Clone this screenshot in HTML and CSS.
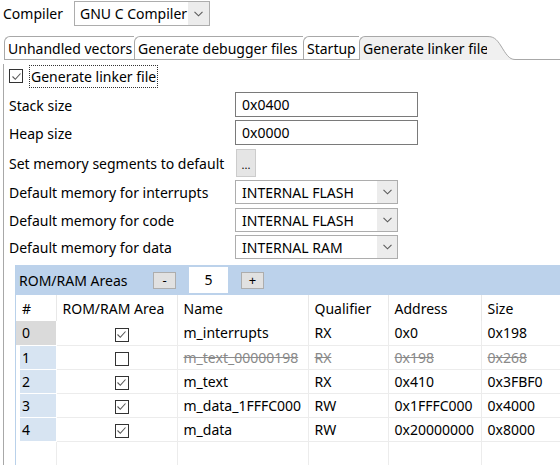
FILE: index.html
```html
<!DOCTYPE html>
<html>
<head>
<meta charset="utf-8">
<link rel="stylesheet" href="styles.css">
</head>
<body>
<div class="top">
  <span class="top-label">Compiler</span>
  <div class="combo">
    <span class="combo-text">GNU C Compiler</span>
    <span class="combo-arrow"><svg width="9" height="6" viewBox="0 0 9 6"><path d="M0.5 0.8 L4.5 4.8 L8.5 0.8" fill="none" stroke="#5a5a5a" stroke-width="1.1"/></svg></span>
  </div>
</div>
<div class="tabs">
  <div class="tab t1">Unhandled vectors</div>
  <div class="tab t2">Generate debugger files</div>
  <div class="tab t3">Startup</div>
  <div class="tab t4 sel">Generate linker file</div>
  <svg class="tab-curve" width="28" height="24" viewBox="0 0 28 24"><path d="M0 0.5 C6 0.5 9 2 14 10 C19 18 22 23.5 28 23.5 L28 24 L0 24 Z" fill="#f0f0f0"/><path d="M0 0.5 C6 0.5 9 2 14 10 C19 18 22 23.5 28 23.5" fill="none" stroke="#a8a8a8" stroke-width="1"/></svg>
  <div class="tab-fill"></div>
</div>
<div class="panel">
  <div class="chkrow">
    <span class="cb"><svg width="11" height="11" viewBox="0 0 11 11"><path d="M1.5 5.5 L4.3 8.3 L9.5 2.5" fill="none" stroke="#555" stroke-width="1.1"/></svg></span>
    <span class="focus-label">Generate linker file</span>
  </div>
  <div class="form">
    <div class="frow r1"><span class="flabel">Stack size</span><span class="input">0x0400</span></div>
    <div class="frow r2"><span class="flabel">Heap size</span><span class="input">0x0000</span></div>
    <div class="frow r3"><span class="flabel">Set memory segments to default</span><span class="dots">...</span></div>
    <div class="frow r4"><span class="flabel">Default memory for interrupts</span><span class="dd"><span class="dd-text">INTERNAL FLASH</span><span class="dd-arrow"><svg width="9" height="6" viewBox="0 0 9 6"><path d="M0.5 0.8 L4.5 4.8 L8.5 0.8" fill="none" stroke="#5a5a5a" stroke-width="1.1"/></svg></span></span></div>
    <div class="frow r5"><span class="flabel">Default memory for code</span><span class="dd"><span class="dd-text">INTERNAL FLASH</span><span class="dd-arrow"><svg width="9" height="6" viewBox="0 0 9 6"><path d="M0.5 0.8 L4.5 4.8 L8.5 0.8" fill="none" stroke="#5a5a5a" stroke-width="1.1"/></svg></span></span></div>
    <div class="frow r6"><span class="flabel">Default memory for data</span><span class="dd"><span class="dd-text">INTERNAL RAM</span><span class="dd-arrow"><svg width="9" height="6" viewBox="0 0 9 6"><path d="M0.5 0.8 L4.5 4.8 L8.5 0.8" fill="none" stroke="#5a5a5a" stroke-width="1.1"/></svg></span></span></div>
  </div>
  <div class="group">
    <div class="ghead">
      <span class="gtitle">ROM/RAM Areas</span>
      <span class="sbtn">-</span>
      <span class="count">5</span>
      <span class="sbtn">+</span>
    </div>
    <table class="grid">
      <colgroup><col class="c0"><col class="c1"><col class="c2"><col class="c3"><col class="c4"><col class="c5"><col class="c6"></colgroup>
      <thead>
        <tr><th>#</th><th>ROM/RAM Area</th><th>Name</th><th>Qualifier</th><th>Address</th><th>Size</th><th class="last"></th></tr>
      </thead>
      <tbody>
        <tr><td class="rh rh0">0</td><td class="ck"><span class="cb"><svg width="11" height="11" viewBox="0 0 11 11"><path d="M1.5 5.5 L4.3 8.3 L9.5 2.5" fill="none" stroke="#555" stroke-width="1.1"/></svg></span></td><td>m_interrupts</td><td>RX</td><td>0x0</td><td>0x198</td><td class="last"></td></tr>
        <tr class="off"><td class="rh">1</td><td class="ck"><span class="cb"></span></td><td class="strike">m_text_00000198</td><td class="strike">RX</td><td class="strike">0x198</td><td class="strike">0x268</td><td class="last"></td></tr>
        <tr><td class="rh">2</td><td class="ck"><span class="cb"><svg width="11" height="11" viewBox="0 0 11 11"><path d="M1.5 5.5 L4.3 8.3 L9.5 2.5" fill="none" stroke="#555" stroke-width="1.1"/></svg></span></td><td>m_text</td><td>RX</td><td>0x410</td><td>0x3FBF0</td><td class="last"></td></tr>
        <tr><td class="rh">3</td><td class="ck"><span class="cb"><svg width="11" height="11" viewBox="0 0 11 11"><path d="M1.5 5.5 L4.3 8.3 L9.5 2.5" fill="none" stroke="#555" stroke-width="1.1"/></svg></span></td><td>m_data_1FFFC000</td><td>RW</td><td>0x1FFFC000</td><td>0x4000</td><td class="last"></td></tr>
        <tr><td class="rh">4</td><td class="ck"><span class="cb"><svg width="11" height="11" viewBox="0 0 11 11"><path d="M1.5 5.5 L4.3 8.3 L9.5 2.5" fill="none" stroke="#555" stroke-width="1.1"/></svg></span></td><td>m_data</td><td>RW</td><td>0x20000000</td><td>0x8000</td><td class="last"></td></tr>
        <tr class="empty"><td></td><td></td><td></td><td></td><td></td><td></td><td class="last"></td></tr>
      </tbody>
    </table>
  </div>
</div>
</body>
</html>
```
FILE: styles.css
```css
* { box-sizing: border-box; }
html, body { margin: 0; padding: 0; }
body {
  width: 560px;
  height: 465px;
  overflow: hidden;
  background: #fff;
  color: #000;
  font-family: "Noto Sans", sans-serif;
  font-size: 14px;
}
.top {
  display: flex;
  align-items: flex-start;
  height: 36px;
  padding: 1px 0 0 3px;
}
.top-label {
  line-height: 25px;
  width: 71px;
}
.combo {
  display: flex;
  width: 136px;
  height: 25px;
  border: 1px solid #adadad;
}
.combo-text {
  flex: 1;
  overflow: hidden;
  white-space: nowrap;
  padding-left: 5px;
  line-height: 23px;
}
.combo-arrow {
  width: 21px;
  background: #ececec;
  display: flex;
  align-items: center;
  justify-content: center;
}
.tabs {
  display: flex;
  height: 24px;
  padding-left: 4px;
}
.tab {
  height: 24px;
  line-height: 23px;
  border-top: 1px solid #a8a8a8;
  border-left: 1px solid #a8a8a8;
  border-bottom: 1px solid #a8a8a8;
  border-top-left-radius: 6px;
  padding-left: 3px;
  white-space: nowrap;
  overflow: hidden;
  flex: none;
}
.t1 { width: 130px; }
.t2 { width: 169px; }
.t3 { width: 56px; }
.t4 { width: 128px; overflow: visible; }
.tab.sel {
  background: #f0f0f0;
  border-bottom: none;
}
.tab-curve { display: block; flex: none; }
.tab-fill {
  flex: 1;
  border-bottom: 1px solid #a8a8a8;
}
.panel {
  margin-left: 3px;
  border-left: 1px solid #a8a8a8;
  padding-left: 5px;
  height: 405px;
}
.chkrow {
  display: flex;
  align-items: center;
  height: 24px;
  margin-top: 4px;
}
.cb {
  display: inline-flex;
  align-items: center;
  justify-content: center;
  width: 14px;
  height: 14px;
  border: 1px solid #333;
  background: #fff;
  flex: none;
}
.focus-label {
  margin-left: 6px;
  border: 1px dotted #333;
  line-height: 21px;
  padding: 0 1px;
}
.form {
  display: flex;
  flex-direction: column;
  margin-top: 4px;
}
.frow {
  display: flex;
  align-items: center;
}
.flabel { width: 226px; white-space: nowrap; padding-top: 1px; }
.r1 { height: 25px; }
.r2 { height: 25px; margin-top: 3px; }
.r3 { height: 28px; margin-top: 4px; }
.r4 { height: 24px; margin-top: 3px; }
.r5 { height: 24px; margin-top: 4px; }
.r6 { height: 24px; margin-top: 3px; }
.input {
  width: 183px;
  height: 25px;
  border: 1px solid #7a7a7a;
  padding-left: 6px;
  line-height: 24px;
}
.dots {
  margin-left: 1px;
  width: 20px;
  height: 28px;
  background: #e5e5e5;
  border: 1px solid #cccccc;
  font-size: 11px;
  line-height: 30px;
  text-align: center;
}
.dd {
  display: flex;
  width: 163px;
  height: 24px;
  border: 1px solid #adadad;
}
.dd-text {
  flex: 1;
  padding-left: 6px;
  line-height: 23px;
  white-space: nowrap;
}
.dd-arrow {
  width: 20px;
  background: #ececec;
  display: flex;
  align-items: center;
  justify-content: center;
}
.group {
  margin-left: 6px;
  margin-top: 6px;
  width: 545px;
  border-left: 1px solid #b9d1ea;
}
.ghead {
  display: flex;
  align-items: center;
  height: 30px;
  background: #bcd2eb;
  padding-left: 3px;
}
.gtitle { width: 134px; white-space: nowrap; }
.sbtn {
  width: 23px;
  height: 17px;
  background: #e1e1e1;
  border: 1px solid #adadad;
  font-size: 13px;
  line-height: 15px;
  text-align: center;
}
.count {
  width: 39px;
  height: 26px;
  margin: 0 13px;
  background: #fff;
  line-height: 26px;
  text-align: center;
}
.grid {
  border-collapse: collapse;
  table-layout: fixed;
  width: 545px;
}
.c0 { width: 40px; }
.c1 { width: 121px; }
.c2 { width: 131px; }
.c3 { width: 80px; }
.c4 { width: 93px; }
.c5 { width: 79px; }
.c6 { width: 1px; }
.grid th {
  height: 26px;
  font-weight: normal;
  text-align: left;
  padding: 0 0 0 6px;
  border-right: 1px solid #e8e8e8;
  white-space: nowrap;
}
.grid td {
  height: 24px;
  padding: 0 0 0 6px;
  border-right: 1px solid #ececec;
  border-bottom: 1px solid #ececec;
  white-space: nowrap;
  overflow: hidden;
}
.grid .last { padding: 0; }
.grid td.rh {
  background: linear-gradient(to right, #fff 4px, #d7e4f2 4px);
  border-bottom: 1px solid #fff;
  border-right: 1px solid #fff;
}
.grid td.rh0 { background: #dadada; }
.grid td.ck {
  text-align: center;
  padding: 0 0 0 10px;
}
.grid td.ck .cb { vertical-align: middle; }
.grid td.strike { color: #8a8a8a; text-decoration: line-through; }
.empty td { height: 24px; }
```
